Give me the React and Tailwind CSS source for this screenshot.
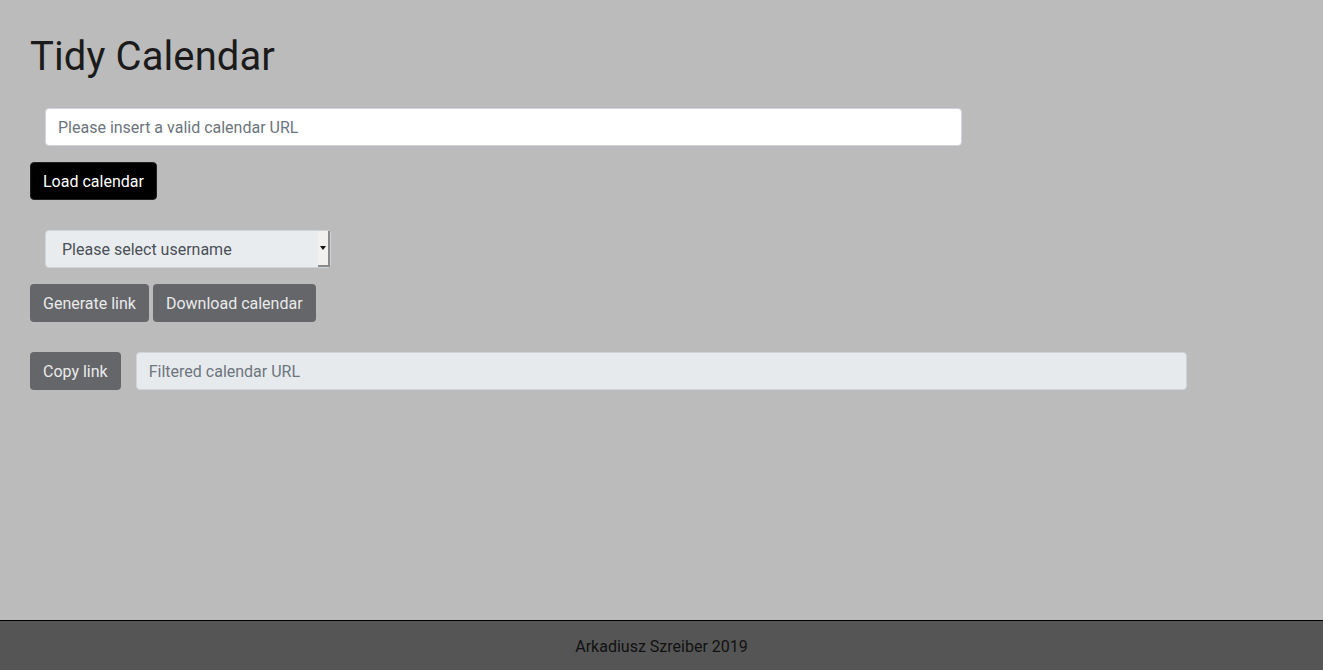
import { useState } from "react";

const font = { fontFamily: "Roboto, 'Liberation Sans', sans-serif" };

export default function App() {
    const [url, setUrl] = useState("");

    return (
        <div
            className="flex flex-col h-[670px] bg-[#bbbbbb] text-[#212529]"
            style={font}
        >
            <main className="flex-1 px-[30px] pt-[33px]">
                <h1 className="text-[40px] leading-[48px] font-normal tracking-[0.1px] text-[#1b1b1b]">
                    Tidy Calendar
                </h1>

                <div className="mt-[27px] pl-[15px]">
                    <input
                        value={url}
                        onChange={(e) => setUrl(e.target.value)}
                        placeholder="Please insert a valid calendar URL"
                        className="w-[917px] h-[38px] px-3 pt-px bg-white border border-[#ced4da] rounded text-base text-[#495057] placeholder:text-[#6c757d] outline-none"
                    />
                </div>

                <button className="mt-4 h-[38px] px-3 pt-[2px] bg-black text-white rounded text-base border border-[#222]">
                    Load calendar
                </button>

                <div className="mt-[30px] pl-[15px]">
                    <div className="flex w-[286px] h-[38px] bg-[#e9ecef] border border-[#ced4da] rounded">
                        <span className="flex-1 pl-4 pt-px leading-[36px] text-base text-[#495057]">
                            Please select username
                        </span>
                        <div className="w-[12px] flex items-center justify-center bg-[#f1f0ee] border-r-2 border-b-2 border-[#8a8a8a]">
                            <svg width="6" height="4" viewBox="0 0 6 4">
                                <path d="M0 0h6L3 4z" fill="#111" />
                            </svg>
                        </div>
                    </div>
                </div>

                <div className="mt-4 flex gap-1">
                    <button className="h-[38px] px-3 pt-[2px] bg-[#64666a] text-[#eaeaea] rounded text-base border border-transparent">
                        Generate link
                    </button>
                    <button className="h-[38px] px-3 pt-[2px] bg-[#64666a] text-[#eaeaea] rounded text-base border border-transparent">
                        Download calendar
                    </button>
                </div>

                <div className="mt-[30px] flex items-center gap-[15px]">
                    <button className="h-[38px] px-3 pt-[2px] bg-[#64666a] text-[#eaeaea] rounded text-base border border-transparent">
                        Copy link
                    </button>
                    <input
                        readOnly
                        placeholder="Filtered calendar URL"
                        className="w-[1051px] h-[38px] px-3 pt-px bg-[#e7eaed] border border-[#ced4da] rounded text-base placeholder:text-[#6c757d] outline-none"
                    />
                </div>
            </main>

            <footer className="h-[50px] pt-[2px] bg-[#555555] border-t border-black flex items-center justify-center text-base text-[#111]">
                Arkadiusz Szreiber 2019
            </footer>
        </div>
    );
}
